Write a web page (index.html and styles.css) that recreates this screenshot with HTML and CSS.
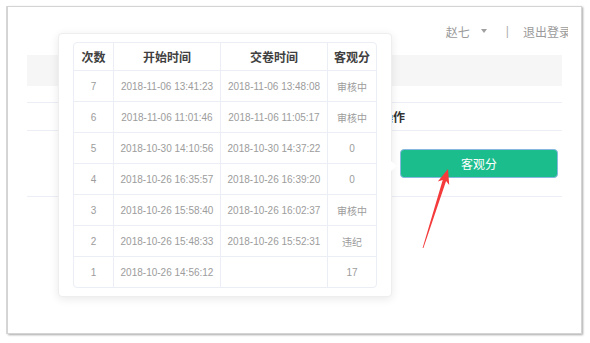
FILE: index.html
```html
<!doctype html>
<html>
    <head>
        <meta charset="utf-8">
        <link rel="stylesheet" href="styles.css">
    </head>
    <body>
        <div class="frame">
            <div class="topbar">
                <div class="user">
                    <span class="user_name">赵七</span>
                    <span class="caret"></span>
                    <span class="sep">|</span>
                    <span class="logout">退出登录</span>
                </div>
            </div>
            <div class="content">
                <div class="band"></div>
                <div class="row row_spacer"></div>
                <div class="row row_head">
                    <span></span>
                    <span class="op_title">操作</span>
                </div>
                <div class="row row_body">
                    <span></span>
                    <div class="op_cell">
                        <button class="score_button" type="button">客观分</button>
                    </div>
                </div>
            </div>

            <div class="popover">
                <table class="records" cellpadding="0" cellspacing="0">
                    <tr>
                        <th class="col_no">次数</th>
                        <th class="col_time">开始时间</th>
                        <th class="col_time">交卷时间</th>
                        <th class="col_score">客观分</th>
                    </tr>
                    <tr><td>7</td><td>2018-11-06 13:41:23</td><td>2018-11-06 13:48:08</td><td>审核中</td></tr>
                    <tr><td>6</td><td>2018-11-06 11:01:46</td><td>2018-11-06 11:05:17</td><td>审核中</td></tr>
                    <tr><td>5</td><td>2018-10-30 14:10:56</td><td>2018-10-30 14:37:22</td><td>0</td></tr>
                    <tr><td>4</td><td>2018-10-26 16:35:57</td><td>2018-10-26 16:39:20</td><td>0</td></tr>
                    <tr><td>3</td><td>2018-10-26 15:58:40</td><td>2018-10-26 16:02:37</td><td>审核中</td></tr>
                    <tr><td>2</td><td>2018-10-26 15:48:33</td><td>2018-10-26 15:52:31</td><td>违纪</td></tr>
                    <tr><td>1</td><td>2018-10-26 14:56:12</td><td></td><td>17</td></tr>
                </table>
                <span class="pop_arrow"></span>
            </div>
        </div>

        <!-- annotation arrow drawn over the screenshot -->
        <svg class="annotation" width="590" height="343" viewBox="0 0 590 343">
            <polygon fill="#f43a3a" points="448,169 449.2,185.1 446.1,180.9 423.4,248.1 422.6,247.9 442.7,179.9 437.8,181.5"/>
        </svg>
    </body>
</html>
```

FILE: styles.css
```css
html, body {
    margin:0;
    background-color:#ffffff;
}

body {
    width:590px;
    height:343px;
    overflow:hidden;
    font-family:"Liberation Sans", "Noto Sans CJK SC", sans-serif;
}

.frame {
    position:relative;
    box-sizing:border-box;
    margin:6px 0 0 7px;
    width:575px;
    height:328px;
    background-color:#ffffff;
    border:1px solid #d4d4d4;
    box-shadow:1px 1px 2px rgba(0,0,0,0.35), -1px 0 0 #dcdcdc;
}

.topbar {
    height:48px;
    margin-right:13px;
    display:flex;
    justify-content:flex-end;
    align-items:center;
    overflow:hidden;
}

.user {
    display:flex;
    align-items:center;
    margin-right:-3px;
    font-size:12px;
    color:#9a9a9a;
    white-space:nowrap;
}

.caret {
    margin-left:11px;
    width:0;
    height:0;
    border-left:3px solid transparent;
    border-right:3px solid transparent;
    border-top:4px solid #a0a0a0;
}

.sep {
    margin-left:19px;
    color:#b0b0b0;
}

.logout {
    margin-left:14px;
}

.content {
    padding:0 19px;
}

.band {
    height:31px;
    background-color:#f6f6f6;
}

.row {
    display:grid;
    grid-template-columns:1fr 181px;
    align-items:center;
    border-bottom:1px solid #ebeef5;
}

.row_spacer {
    height:16px;
}

.row_head {
    height:27px;
}

.op_title {
    font-size:12px;
    font-weight:bold;
    color:#333333;
}

.row_body {
    height:65px;
}

.op_cell {
    display:flex;
    padding-left:19px;
}

.score_button {
    width:158px;
    height:29px;
    padding:0;
    font-family:"Liberation Sans", "Noto Sans CJK SC", sans-serif;
    font-size:12px;
    color:#ffffff;
    background-color:#1cbd8d;
    border:1px solid #86b8e0;
    border-radius:4px;
}

.popover {
    position:absolute;
    left:50px;
    top:26px;
    box-sizing:border-box;
    width:334px;
    padding:8px 14px;
    background-color:#ffffff;
    border:1px solid #eeeeee;
    border-radius:4px;
    box-shadow:0 2px 10px rgba(0,0,0,0.09);
}

.pop_arrow {
    position:absolute;
    right:-6px;
    top:127px;
    width:0;
    height:0;
    border-top:5px solid transparent;
    border-bottom:5px solid transparent;
    border-left:6px solid #ffffff;
}

.records {
    width:304px;
    border-collapse:separate;
    border-spacing:0;
    border:1px solid #ebeef5;
    border-radius:4px;
    table-layout:fixed;
}

.records th,
.records td {
    padding:0;
    text-align:center;
    border-right:1px solid #ebeef5;
    border-bottom:1px solid #ebeef5;
    white-space:nowrap;
}

.records th:last-child,
.records td:last-child {
    border-right:none;
}

.records tr:last-child td {
    border-bottom:none;
}

.records th {
    height:27px;
    font-size:12px;
    font-weight:bold;
    color:#404040;
}

.records td {
    height:30px;
    font-size:10px;
    color:#9c9c9c;
}

.col_no {
    width:39px;
}

.col_time {
    width:106px;
}

.annotation {
    position:absolute;
    left:0;
    top:0;
    pointer-events:none;
}
```
